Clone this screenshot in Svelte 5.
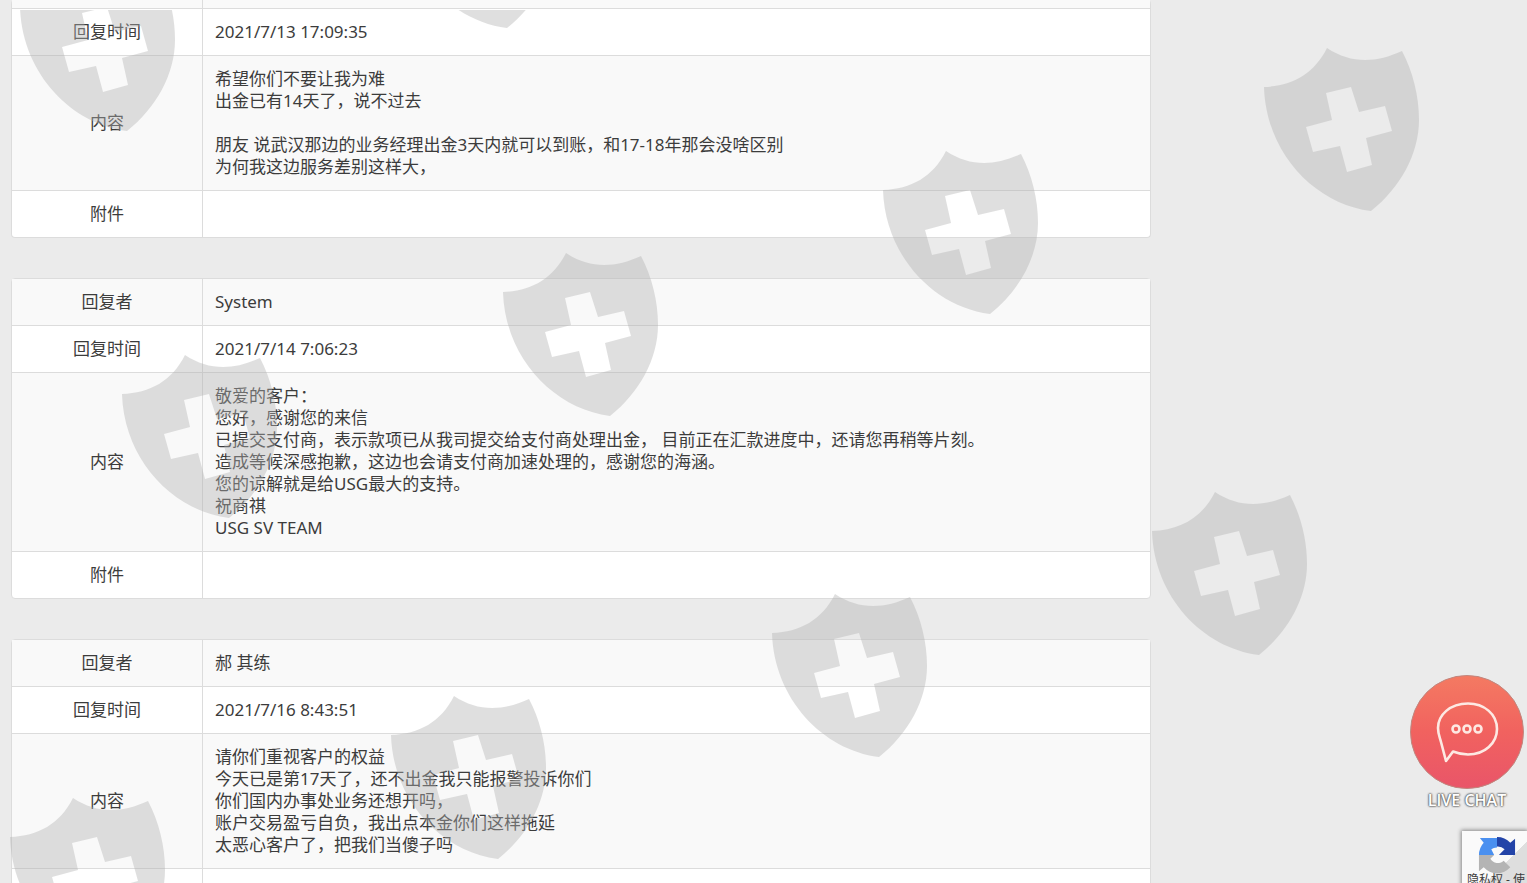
<script lang="ts">
	type Row = { label: string; lines: string[] };

	const replies: Row[][] = [
		[
			{ label: '', lines: [] },
			{ label: '回复时间', lines: ['2021/7/13 17:09:35'] },
			{
				label: '内容',
				lines: [
					'希望你们不要让我为难',
					'出金已有14天了，说不过去',
					'',
					'朋友 说武汉那边的业务经理出金3天内就可以到账，和17-18年那会没啥区别',
					'为何我这边服务差别这样大，'
				]
			},
			{ label: '附件', lines: [] }
		],
		[
			{ label: '回复者', lines: ['System'] },
			{ label: '回复时间', lines: ['2021/7/14 7:06:23'] },
			{
				label: '内容',
				lines: [
					'敬爱的客户：',
					'您好，感谢您的来信',
					'已提交支付商，表示款项已从我司提交给支付商处理出金， 目前正在汇款进度中，还请您再稍等片刻。',
					'造成等候深感抱歉，这边也会请支付商加速处理的，感谢您的海涵。',
					'您的谅解就是给USG最大的支持。',
					'祝商祺',
					'USG SV TEAM'
				]
			},
			{ label: '附件', lines: [] }
		],
		[
			{ label: '回复者', lines: ['郝 其练'] },
			{ label: '回复时间', lines: ['2021/7/16 8:43:51'] },
			{
				label: '内容',
				lines: [
					'请你们重视客户的权益',
					'今天已是第17天了，还不出金我只能报警投诉你们',
					'你们国内办事处业务还想开吗，',
					'账户交易盈亏自负，我出点本金你们这样拖延',
					'太恶心客户了，把我们当傻子吗'
				]
			},
			{ label: '', lines: [] }
		]
	];

	const shields = [
		[400, -145],
		[20, -42],
		[1264, 38],
		[883, 141],
		[503, 243],
		[122, 345],
		[1152, 482],
		[772, 584],
		[391, 686],
		[10, 788]
	];
</script>

<div class="page">
	<main>
		{#each replies as rows}
			<table>
				<tbody>
					{#each rows as row}
						<tr>
							<th scope="row">{row.label}</th>
							<td>{row.lines.join('\n')}</td>
						</tr>
					{/each}
				</tbody>
			</table>
		{/each}
	</main>

	<svg class="watermark" aria-hidden="true">
		<defs>
			<path
				id="shield"
				fill-rule="evenodd"
				d="M0 39C28 38 50 26 63 0C87 16 112 15 138 3C149 24 155 48 155 72C155 106 136 140 107 163C51 156 2 105 0 39Z
					M62 45L87 39L95 64L121 58L128 83L102 90L108 117L83 124L76 98L49 104L42 79L68 72Z"
			/>
		</defs>
		{#each shields as [x, y]}
			<use href="#shield" {x} {y} />
		{/each}
	</svg>

	<button class="chat">
		<svg viewBox="0 0 114 114" aria-hidden="true">
			<defs>
				<linearGradient id="coral" x1="0" y1="0" x2="0" y2="1">
					<stop offset="0" stop-color="#f47a62" />
					<stop offset="0.5" stop-color="#f1625f" />
					<stop offset="1" stop-color="#e95569" />
				</linearGradient>
			</defs>
			<circle cx="57" cy="57" r="56.5" fill="url(#coral)" stroke="#c0877f" />
			<g fill="none" stroke="#fde9e3" stroke-width="2.6" stroke-linejoin="round">
				<path
					d="M36 86L43 76.500C48 78.500 53 79.500 58 79.500C75 79.500 87 68 87 54C87 39 74 28.500 58 28.500C40 28.500 28 40 28 53C28 59 30 63 31 67Z"
				/>
				<circle cx="46" cy="54" r="3.500" />
				<circle cx="57" cy="54" r="3.500" />
				<circle cx="68" cy="54" r="3.500" />
			</g>
		</svg>
		<span>LIVE CHAT</span>
	</button>

	<aside class="captcha">
		<svg viewBox="0 0 40 40" aria-hidden="true">
			<path fill="#4a90f0" d="M1 20A19 19 0 0 1 6 7L2 2H20V12A9 9 0 0 0 14 14L17 20Z" />
			<path fill="#2344a8" d="M20 1A19 19 0 0 1 34 7L39 3V20H22L28 14A10 10 0 0 0 20 11Z" />
			<path fill="#b4b4b4" d="M1 20H17L13 24A9 9 0 0 0 27 26L34 33A19 19 0 0 1 6 33L1 37Z" />
		</svg>
		<small>隐私权 - 使</small>
	</aside>
</div>

<style>
	:global(body) {
		background: #ebebeb;
	}

	.page {
		position: relative;
		height: 100vh;
		overflow: hidden;
		font-family: 'Noto Sans', 'Noto Sans CJK SC', sans-serif;
		font-size: 17px;
		line-height: 22px;
		color: #3c3c3c;
	}

	main {
		display: flex;
		flex-direction: column;
		gap: 40px;
		padding-left: 11px;
	}

	table {
		width: 100%;
		max-width: 1140px;
		border: 1px solid #dcdcdc;
		border-radius: 4px;
		border-spacing: 0;
		table-layout: fixed;
		background: #fff;
	}

	table:first-child {
		border-top: 0;
	}

	tr:nth-child(odd) {
		background: #f9f9f9;
	}

	th,
	td {
		padding: 12px;
		border-top: 1px solid #dcdcdc;
		height: 22px;
		font-weight: 400;
	}

	th {
		width: 166px;
		text-align: center;
	}

	td {
		border-left: 1px solid #dcdcdc;
		white-space: pre-wrap;
	}

	tr:first-child > * {
		border-top: 0;
	}

	table:first-child tr:first-child > * {
		height: 8px;
		padding-block: 0;
	}

	.watermark {
		position: absolute;
		top: 10px;
		left: 0;
		width: 100%;
		height: 100%;
		fill: #b1b1b1;
		opacity: 0.4;
		pointer-events: none;
	}

	.chat {
		position: absolute;
		right: 3px;
		bottom: 72px;
		display: flex;
		flex-direction: column;
		align-items: center;
		padding: 0;
		border: 0;
		background: none;
		font: 600 16px/22px 'Open Sans', sans-serif;
		color: #fff;
		text-shadow:
			0 0 2px #555,
			0 0 2px #555,
			0 0 2px #777;
		cursor: pointer;
	}

	.chat svg {
		width: 114px;
		height: 114px;
	}

	.captcha {
		position: absolute;
		right: 0;
		bottom: -8px;
		display: flex;
		flex-direction: column;
		align-items: flex-start;
		box-sizing: border-box;
		width: 65px;
		height: 60px;
		padding: 5px 0 0 5px;
		overflow: hidden;
		background: linear-gradient(135deg, #fafafa 60%, #dedede 60%);
		box-shadow: 0 0 4px 1px #888;
	}

	.captcha svg {
		flex: none;
		width: 38px;
		height: 38px;
		margin-left: 11px;
	}

	.captcha small {
		font-size: 12px;
		line-height: 12px;
		white-space: nowrap;
	}
</style>
